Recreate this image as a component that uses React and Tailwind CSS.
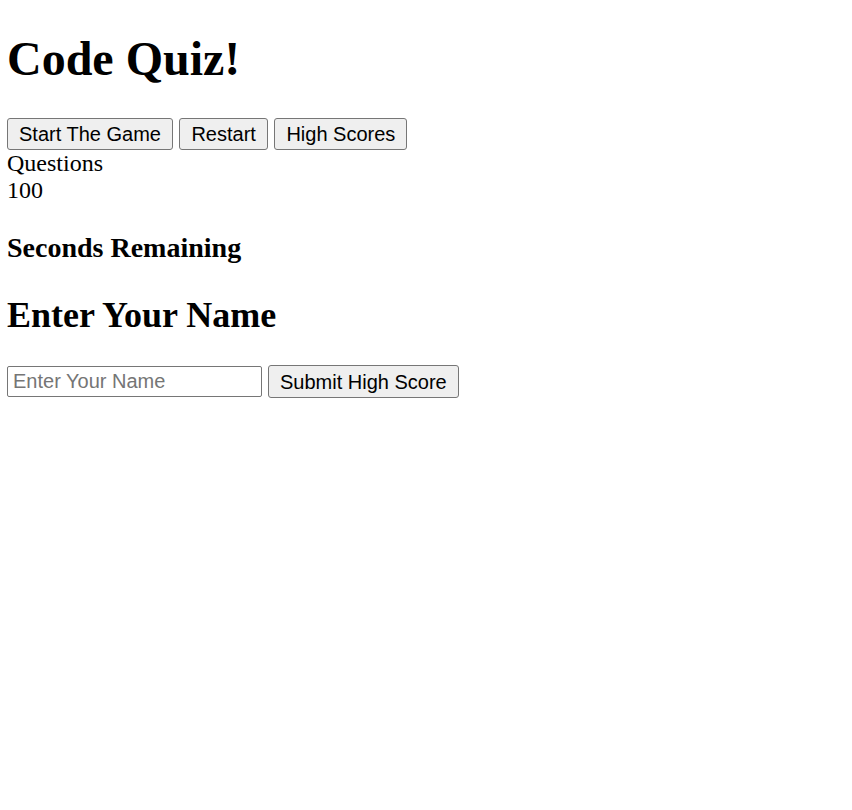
export default function App() {
  const btn =
    "h-[32px] px-[11px] border border-[#767676] rounded-[3px] bg-[#efefef] text-black text-[20px] leading-none font-['Liberation_Sans',Arial,sans-serif]";
  return (
    <div className="min-h-[810px] bg-white text-black px-[7px] pt-px font-['Liberation_Serif','Times_New_Roman',serif]">
      <h1 className="text-[48px] font-bold leading-[1.107] mt-[31px]">Code Quiz!</h1>
      <div className="flex gap-[6.5px] mt-[32.9px]">
        <button className={btn}>Start The Game</button>
        <button className={btn}>Restart</button>
        <button className={btn}>High Scores</button>
      </div>
      <div className="text-[24px] leading-[1.107]">Questions</div>
      <div className="text-[24px] leading-[1.107]">100</div>
      <h3 className="text-[28px] font-bold leading-[1.107] mt-[29px]">Seconds Remaining</h3>
      <h2 className="text-[36px] font-bold leading-[1.107] mt-[32.5px]">Enter Your Name</h2>
      <div className="flex items-center gap-[6.5px] mt-[30px]">
        <input
          type="text"
          placeholder="Enter Your Name"
          className="h-[31px] w-[254.5px] px-[5px] border border-[#767676] rounded-[2px] bg-white text-[20px] text-black placeholder:text-[#757575] font-['Liberation_Sans',Arial,sans-serif] outline-none"
        />
        <button className={btn + " h-[33px]"}>Submit High Score</button>
      </div>
    </div>
  );
}
